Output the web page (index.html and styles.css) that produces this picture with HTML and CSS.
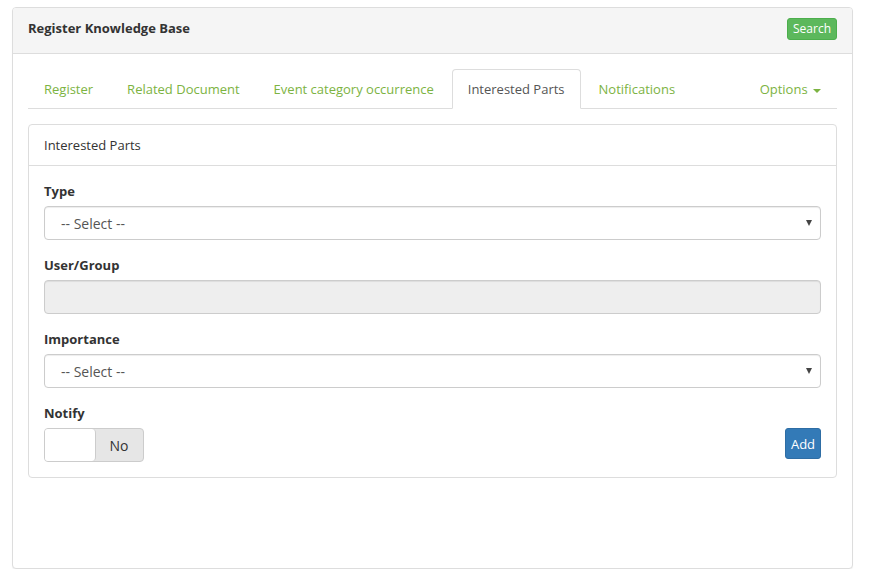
FILE: index.html
```html
<!DOCTYPE html>
<html>
<head>
<meta charset="utf-8">
<link rel="stylesheet" href="styles.css">
</head>
<body>
<div class="panel outer">
  <div class="panel-heading outer-heading">
    <span class="title">Register Knowledge Base</span>
    <button class="btn btn-search">Search</button>
  </div>
  <div class="outer-body">
    <ul class="tabs">
      <li class="tab">Register</li>
      <li class="tab">Related Document</li>
      <li class="tab">Event category occurrence</li>
      <li class="tab active">Interested Parts</li>
      <li class="tab">Notifications</li>
      <li class="tab options">Options <span class="caret"></span></li>
    </ul>
    <div class="panel inner">
      <div class="inner-heading">Interested Parts</div>
      <div class="inner-body">
        <div class="group">
          <label class="label">Type</label>
          <div class="select"><span>-- Select --</span><span class="arrow"></span></div>
        </div>
        <div class="group">
          <label class="label">User/Group</label>
          <div class="input disabled"></div>
        </div>
        <div class="group">
          <label class="label">Importance</label>
          <div class="select"><span>-- Select --</span><span class="arrow"></span></div>
        </div>
        <div class="notify-row">
          <div>
            <label class="label">Notify</label>
            <div class="toggle"><span class="toggle-right">No</span><span class="toggle-left"></span></div>
          </div>
          <button class="btn btn-add">Add</button>
        </div>
      </div>
    </div>
  </div>
</div>
</body>
</html>
```
FILE: styles.css
```css
* { box-sizing: border-box; }
html, body { margin: 0; padding: 0; background: #fff; }
body {
  font-family: "Open Sans", "Liberation Sans", sans-serif;
  font-size: 13px;
  color: #333;
  padding: 7px 16px 0 12px;
}
.panel {
  border: 1px solid #ddd;
  border-radius: 4px;
  background: #fff;
}
.outer {
  width: 841px;
  height: 562px;
  box-shadow: 0 1px 1px rgba(0,0,0,0.05);
}
.outer-heading {
  background: #f5f5f5;
  border-bottom: 1px solid #ddd;
  border-radius: 3px 3px 0 0;
  height: 46px;
  padding: 10px 15px 0;
  display: flex;
  align-items: flex-start;
  justify-content: space-between;
}
.title { font-weight: 700; font-size: 13px; color: #333; line-height: 20px; }
.btn {
  border: 1px solid transparent;
  border-radius: 3px;
  color: #fff;
  font-family: inherit;
  cursor: pointer;
}
.btn-search {
  background: #5cb85c;
  border-color: #4cae4c;
  font-size: 12px;
  height: 22px;
  line-height: 18px;
  padding: 0 5px;
  width: 50px;
}
.outer-body { padding: 15px; }
.tabs {
  list-style: none;
  margin: 0;
  padding: 0;
  display: flex;
  border-bottom: 1px solid #ddd;
}
.tab {
  padding: 10px 15px;
  line-height: 18px;
  margin-right: 2px;
  margin-bottom: -1px;
  border: 1px solid transparent;
  border-radius: 4px 4px 0 0;
  color: #7cb342;
  white-space: nowrap;
}
.tab.active {
  color: #555;
  background: #fff;
  border-color: #ddd #ddd transparent;
}
.tab.options { margin-left: auto; margin-right: 0; }
.caret {
  display: inline-block;
  width: 0; height: 0;
  border-left: 4px solid transparent;
  border-right: 4px solid transparent;
  border-top: 4px solid #7cb342;
  vertical-align: middle;
  margin-left: 2px;
}
.inner { margin-top: 15px; width: 809px; }
.inner-heading {
  padding: 10px 15px;
  line-height: 20px;
  border-bottom: 1px solid #ddd;
  color: #333;
}
.inner-body { padding: 15px; }
.group { margin-bottom: 15px; }
.label {
  display: block;
  font-weight: 700;
  line-height: 20px;
  margin-bottom: 5px;
}
.select, .input {
  height: 34px;
  border: 1px solid #ccc;
  border-radius: 4px;
  box-shadow: inset 0 1px 1px rgba(0,0,0,0.075);
}
.select {
  display: flex;
  align-items: center;
  justify-content: space-between;
  padding: 0 8px 0 16px;
  color: #555;
  font-size: 14px;
}
.arrow {
  width: 0; height: 0;
  border-left: 3px solid transparent;
  border-right: 3px solid transparent;
  border-top: 6px solid #444;
}
.input.disabled { background: #eee; }
.notify-row {
  display: flex;
  justify-content: space-between;
  align-items: flex-end;
}
.toggle {
  position: relative;
  width: 100px;
  height: 34px;
  border: 1px solid #ccc;
  border-radius: 4px;
  overflow: hidden;
  background: #e6e6e6;
}
.toggle-right {
  display: flex;
  align-items: center;
  justify-content: center;
  height: 100%;
  padding-left: 50px;
  color: #333;
  font-size: 14px;
}
.toggle-left {
  position: absolute;
  left: 0;
  top: 0;
  width: 51px;
  height: 32px;
  background: #fff;
  border-right: 1px solid #ccc;
  border-radius: 0 4px 4px 0;
}
.btn-add {
  background: #337ab7;
  border-color: #2e6da4;
  font-size: 13px;
  height: 31px;
  width: 36px;
  padding: 0;
  margin-bottom: 3px;
}
```
